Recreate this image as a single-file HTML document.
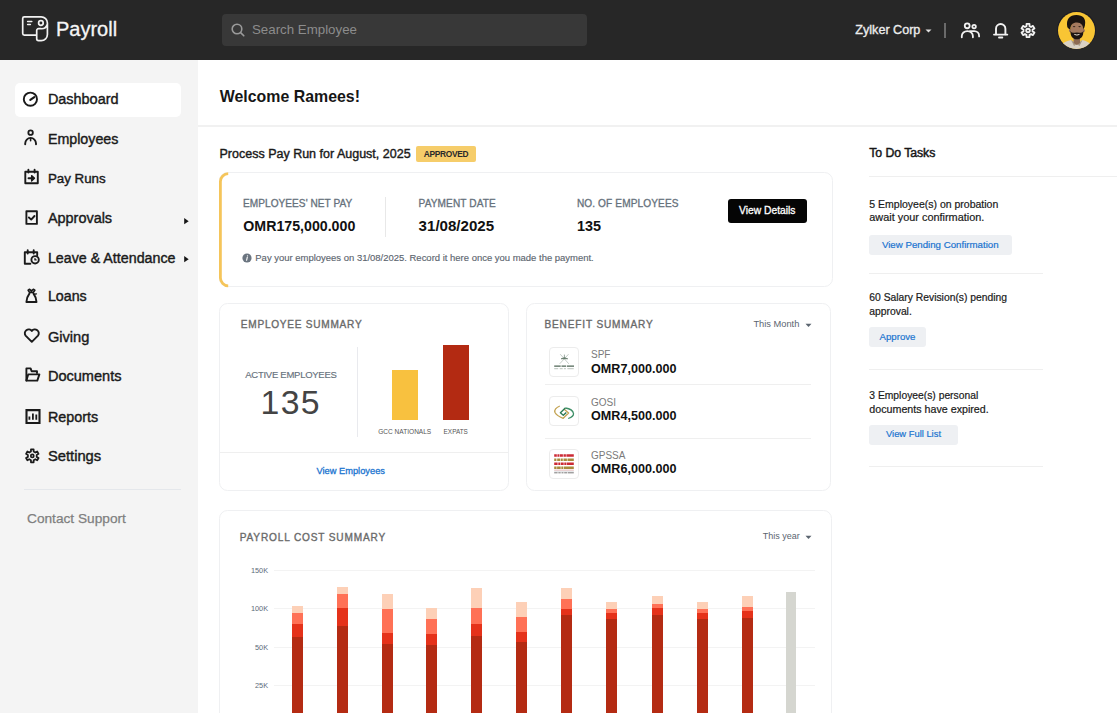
<!DOCTYPE html>
<html><head><meta charset="utf-8"><title>Payroll</title>
<style>
html,body{margin:0;padding:0;}
body{width:1117px;height:713px;overflow:hidden;position:relative;background:#fff;font-family:"Liberation Sans",sans-serif;}
.t{position:absolute;line-height:1;white-space:nowrap;}
.r{position:absolute;}
</style></head><body>
<div class="r" style="left:0px;top:0px;width:1117px;height:60px;background:#272727;"></div>
<div class="r" style="left:0px;top:60px;width:198px;height:653px;background:#f4f4f4;"></div>
<div class="r" style="left:198px;top:125px;width:919px;height:1.5px;background:#f1f1f1;"></div>
<svg class="r" style="left:18px;top:12px" width="34" height="34" viewBox="18 12 34 34" fill="none" stroke="#f2f2f2" stroke-width="1.7" stroke-linejoin="round" stroke-linecap="round">
<path d="M36.7 35.2 H24.3 A1.6 1.6 0 0 1 22.7 33.6 V18.5 A1.6 1.6 0 0 1 24.3 16.9 H41.2 A6.2 6.2 0 0 1 47.4 23.1 V34.4 A6.2 6.2 0 0 1 41.2 40.6 H38.5 A1.8 1.8 0 0 1 36.7 38.8 V30.5 A1.8 1.8 0 0 1 38.5 28.7 H40.9 A6 6 0 0 0 47.2 24.5"/>
<circle cx="40.9" cy="23" r="2.3"/>
<path d="M27.6 21.5 H31.8 M27.6 24.6 H30.4" stroke-width="1.5"/>
</svg>
<div class="t" style="left:56.00px;top:18.87px;font-size:20px;font-weight:400;color:#f5f5f5;-webkit-text-stroke:0.3px #f5f5f5;">Payroll</div>
<div class="r" style="left:222px;top:14px;width:365px;height:32px;background:#383838;border-radius:4px;"></div>
<svg class="r" style="left:230px;top:22px" width="16" height="16" viewBox="0 0 16 16" fill="none" stroke="#9a9a9a" stroke-width="1.6" stroke-linecap="round">
<circle cx="7" cy="7" r="4.8"/><path d="M10.6 10.6 L13.8 13.8"/></svg>
<div class="t" style="left:252.00px;top:22.74px;font-size:13.3px;font-weight:400;color:#8c8c8c;">Search Employee</div>
<div class="t" style="left:855.30px;top:24.13px;font-size:12.6px;font-weight:400;color:#ececec;-webkit-text-stroke:0.35px #ececec;">Zylker Corp</div>
<svg class="r" style="left:925px;top:29px" width="7" height="4" viewBox="0 0 7 4"><path d="M0.5 0.5 H6.5 L3.5 3.5 Z" fill="#e0e0e0"/></svg>
<div class="r" style="left:944px;top:23px;width:1.6px;height:15px;background:#6a6a6a;"></div>
<svg class="r" style="left:955px;top:16px" width="30" height="28" viewBox="955 16 30 28" fill="none" stroke="#f2f2f2" stroke-width="1.8" stroke-linecap="round">
<circle cx="967.2" cy="25.8" r="2.45"/><circle cx="974.1" cy="26.6" r="1.75"/>
<path d="M961.8 37.3 V36 A5.55 4.9 0 0 1 972.9 36 V37.3"/><path d="M970 31.1 H974.3 A4.8 4.8 0 0 1 979.1 35.9 V36.4"/></svg>
<svg class="r" style="left:988px;top:16px" width="54" height="28" viewBox="988 16 54 28" fill="none" stroke="#f2f2f2" stroke-width="1.9" stroke-linecap="round" stroke-linejoin="round">
<path d="M996 34.2 V28.7 A4.7 4.7 0 0 1 1005.4 28.7 V34.2"/><path d="M994 34.6 H1007.3"/><path d="M999 37.5 H1002.3"/>
<path d="M1026.50 26.15 L1026.50 23.90 L1029.50 23.90 L1029.50 26.15 L1031.02 27.03 L1032.97 25.90 L1034.47 28.50 L1032.52 29.62 L1032.52 31.38 L1034.47 32.50 L1032.97 35.10 L1031.02 33.97 L1029.50 34.85 L1029.50 37.10 L1026.50 37.10 L1026.50 34.85 L1024.98 33.97 L1023.03 35.10 L1021.53 32.50 L1023.48 31.38 L1023.48 29.62 L1021.53 28.50 L1023.03 25.90 L1024.98 27.03 Z" stroke-width="1.8"/><circle cx="1028" cy="30.5" r="1.8"/></svg>
<div class="r" style="left:1056.8px;top:10.7px;width:38.8px;height:38.8px;background:#1c1c24;border-radius:50%;"></div>
<div class="r" style="left:1057.7px;top:11.6px;width:37px;height:37px;border-radius:50%;overflow:hidden;background:#f8c534;">
<svg style="position:absolute;left:-1.7px;top:-1.6px" width="40" height="40" viewBox="0 0 40 40">
<path d="M3 40 C5 33 10 31 15 30 L20.8 34 L26.5 30 C31 31 35 33 38 40 Z" fill="#d9d1c5"/>
<path d="M15 30 L18 36 L20.8 34 Z M26.5 30 L23.5 36 L20.8 34 Z" fill="#a99a86"/>
<path d="M17.6 26 H24 V33 L20.8 35 L17.6 33 Z" fill="#8d6a52"/>
<ellipse cx="14.2" cy="20.5" rx="1.2" ry="1.8" fill="#9a7258"/><ellipse cx="27.6" cy="20.5" rx="1.2" ry="1.8" fill="#9a7258"/>
<ellipse cx="20.9" cy="19.8" rx="6.5" ry="8.4" fill="#a57a5e"/>
<path d="M11.3 17 C9.8 9 14 5 20.5 5.1 C26.8 5.2 30.2 8.5 29 15 C28.7 17 28 18 27.4 19.5 C27 15.5 25.2 12.6 21 12.6 C16.6 12.6 14.6 15 14.3 19.5 C13 19 11.8 18 11.3 17 Z" fill="#1a1410"/>
<path d="M14.4 20.5 C14.3 26.5 16.8 29.3 20.9 29.3 C25 29.3 27.6 26.5 27.4 20.5 C26.6 23.6 25 22.6 20.9 22.4 C16.8 22.6 15.2 23.6 14.4 20.5 Z" fill="#1d1511"/>
<ellipse cx="18.1" cy="16.6" rx="1.3" ry="0.7" fill="#3a2a20"/><ellipse cx="23.6" cy="16.6" rx="1.3" ry="0.7" fill="#3a2a20"/>
<path d="M18.3 24.4 Q20.9 25.7 23.5 24.4" stroke="#e9dfd2" stroke-width="1" fill="none"/>
</svg></div>
<div class="r" style="left:15px;top:83px;width:166px;height:33.5px;background:#ffffff;border-radius:5px;"></div>
<div class="t" style="left:47.90px;top:91.96px;font-size:14.455599999999999px;font-weight:400;color:#1a1a1a;-webkit-text-stroke:0.4px #1a1a1a;">Dashboard</div>
<div class="t" style="left:47.90px;top:132.44px;font-size:14.252px;font-weight:400;color:#1a1a1a;-webkit-text-stroke:0.4px #1a1a1a;">Employees</div>
<div class="t" style="left:47.90px;top:172.21px;font-size:13.335799999999999px;font-weight:400;color:#1a1a1a;-webkit-text-stroke:0.4px #1a1a1a;">Pay Runs</div>
<div class="t" style="left:47.90px;top:211.26px;font-size:14.455599999999999px;font-weight:400;color:#1a1a1a;-webkit-text-stroke:0.4px #1a1a1a;">Approvals</div>
<div class="t" style="left:47.90px;top:250.94px;font-size:14.252px;font-weight:400;color:#1a1a1a;-webkit-text-stroke:0.4px #1a1a1a;">Leave &amp; Attendance</div>
<div class="t" style="left:47.90px;top:288.94px;font-size:14.252px;font-weight:400;color:#1a1a1a;-webkit-text-stroke:0.4px #1a1a1a;">Loans</div>
<div class="t" style="left:47.90px;top:330.19px;font-size:14.6592px;font-weight:400;color:#1a1a1a;-webkit-text-stroke:0.4px #1a1a1a;">Giving</div>
<div class="t" style="left:47.90px;top:368.58px;font-size:14.557400000000001px;font-weight:400;color:#1a1a1a;-webkit-text-stroke:0.4px #1a1a1a;">Documents</div>
<div class="t" style="left:47.90px;top:409.55px;font-size:14.3538px;font-weight:400;color:#1a1a1a;-webkit-text-stroke:0.4px #1a1a1a;">Reports</div>
<div class="t" style="left:47.90px;top:448.50px;font-size:14.761000000000001px;font-weight:400;color:#1a1a1a;-webkit-text-stroke:0.4px #1a1a1a;">Settings</div>
<svg class="r" style="left:184px;top:217.8px" width="5" height="7" viewBox="0 0 5 7"><path d="M0.2 0 L4.7 3.15 L0.2 6.3 Z" fill="#151515"/></svg>
<svg class="r" style="left:184px;top:255.7px" width="5" height="7" viewBox="0 0 5 7"><path d="M0.2 0 L4.7 3.15 L0.2 6.3 Z" fill="#151515"/></svg>
<svg class="r" style="left:0px;top:60px" width="198" height="440" viewBox="0 60 198 440" fill="none" stroke="#1a1a1a" stroke-width="1.9" stroke-linecap="round" stroke-linejoin="round">
<circle cx="30.4" cy="99.2" r="6.6"/><path d="M30.3 99.9 L34.3 97.1" stroke-width="2.1"/>
<circle cx="30.6" cy="132.7" r="2.25" stroke-width="1.8"/><path d="M25.2 144.2 V143.5 A5.4 5.6 0 0 1 36 143.5 V144.2"/><path d="M30.6 138.5 V140.8" stroke-width="1.6"/>
<path d="M25.3 171.7 H37.8 V183.2 H25.3 Z"/><path d="M28.4 169.8 V172.6 M34.6 169.8 V172.6"/><path d="M28.5 178.3 H33.6"/><path d="M31.6 175.6 L34.5 178.3 L31.6 181 Z" fill="#1a1a1a" stroke-width="1.3"/>
<path d="M26.4 211.2 H36.9 V223.9 H26.4 Z"/><path d="M28.9 217.5 L31.2 219.6 L34.5 216"/>
<path d="M30.4 263.7 H24.8 V252.2 H37.2 V255.2"/><path d="M27.7 250.2 V253.6 M33.7 250.2 V253.6"/><circle cx="35.1" cy="259.8" r="3.7"/><path d="M35 258.6 V259.9 H36.1" stroke-width="1.4"/>
<path d="M28.2 290.3 L29.6 289.3 L31.4 290.9 L33.3 289.3 L34.8 290.3 L33.4 292.4 H29.5 Z" stroke-width="1.7"/><path d="M29.4 293.6 C27.3 296.4 26.4 299.4 26.4 302 H36.5 C36.5 299.4 35.6 296.4 33.5 293.6" stroke-width="1.9"/><path d="M34.3 294.3 L36.4 293.9" stroke-width="1.4"/>
<path d="M31.8 341.8 L25.6 335.6 A3.3 3.3 0 0 1 31.8 330.9 A3.3 3.3 0 0 1 38 335.6 Z"/>
<path d="M26.4 380.6 V368.4 H30.6 L31.6 371.3 H37 V373"/><path d="M26.4 380.6 L28.2 374.4 H39.4 L37.3 380.6 Z"/>
<path d="M26.5 410.1 H39.5 V423 H26.5 Z" stroke-width="2.1" stroke-linejoin="miter"/><path d="M29.4 416.5 V419.8 M32.9 413.5 V419.8 M36.3 414.6 V419.8" stroke-width="1.8" stroke-linecap="butt"/>
<path d="M30.95 451.61 L30.95 449.45 L33.65 449.45 L33.65 451.61 L35.34 452.58 L37.21 451.51 L38.56 453.84 L36.69 454.92 L36.69 456.88 L38.56 457.96 L37.21 460.29 L35.34 459.22 L33.65 460.19 L33.65 462.35 L30.95 462.35 L30.95 460.19 L29.26 459.22 L27.39 460.29 L26.04 457.96 L27.91 456.88 L27.91 454.92 L26.04 453.84 L27.39 451.51 L29.26 452.58 Z" stroke-width="1.75"/><circle cx="32.3" cy="455.9" r="1.5" stroke-width="1.7"/>
</svg>
<div class="r" style="left:24px;top:488.5px;width:157px;height:1.5px;background:#e4e7eb;"></div>
<div class="t" style="left:27.00px;top:511.90px;font-size:13.7px;font-weight:400;color:#7f7f7f;-webkit-text-stroke:0.25px #7f7f7f;">Contact Support</div>
<div class="t" style="left:219.80px;top:89.24px;font-size:15.9px;font-weight:700;color:#161616;">Welcome Ramees!</div>
<div class="t" style="left:219.50px;top:148.22px;font-size:12.5px;font-weight:400;color:#1a1a1a;-webkit-text-stroke:0.4px #1a1a1a;">Process Pay Run for August, 2025</div>
<div class="r" style="left:416px;top:146px;width:60px;height:15.5px;background:#f6cd6a;border-radius:2px;"></div>
<div class="t" style="left:416.00px;top:149.89px;font-size:8.4px;font-weight:700;color:#2a2a2a;letter-spacing:-0.3px;width:60px;text-align:center;">APPROVED</div>
<div class="r" style="left:219px;top:172px;width:614px;height:115px;box-sizing:border-box;border:1.5px solid #eff0f2;border-radius:8.5px;background:#fff;"></div>
<svg class="r" style="left:210px;top:165px" width="40" height="130" viewBox="210 165 40 130" fill="none"><path d="M228.2 173.7 A8 8 0 0 0 220.4 181.5 V278 A8 8 0 0 0 228.2 285.8" stroke="#f5c55a" stroke-width="2.8"/></svg>
<div class="t" style="left:243.00px;top:199.35px;font-size:10.1px;font-weight:400;color:#66717c;letter-spacing:0.04px;-webkit-text-stroke:0.3px #66717c;">EMPLOYEES&#39; NET PAY</div>
<div class="t" style="left:243.30px;top:218.88px;font-size:14.2px;font-weight:700;color:#111;">OMR175,000.000</div>
<div class="r" style="left:385px;top:197px;width:1px;height:40px;background:#e8e8e8;"></div>
<div class="t" style="left:418.60px;top:199.35px;font-size:10.1px;font-weight:400;color:#66717c;letter-spacing:0.1px;-webkit-text-stroke:0.3px #66717c;">PAYMENT DATE</div>
<div class="t" style="left:418.60px;top:218.12px;font-size:15.1px;font-weight:700;color:#111;">31/08/2025</div>
<div class="t" style="left:576.90px;top:199.35px;font-size:10.1px;font-weight:400;color:#66717c;letter-spacing:0.12px;-webkit-text-stroke:0.3px #66717c;">NO. OF EMPLOYEES</div>
<div class="t" style="left:576.90px;top:218.71px;font-size:14.4px;font-weight:700;color:#111;">135</div>
<div class="r" style="left:728px;top:199px;width:78.5px;height:24px;background:#050505;border-radius:3px;"></div>
<div class="t" style="left:728.00px;top:205.78px;font-size:10.3px;font-weight:400;color:#fff;width:78.5px;text-align:center;-webkit-text-stroke:0.3px #fff;">View Details</div>
<svg class="r" style="left:242.3px;top:253.1px" width="10" height="10" viewBox="0 0 10 10"><circle cx="5" cy="5" r="4.6" fill="#6b7580"/><path d="M5.3 4.2 L4.6 7.3" stroke="#fff" stroke-width="1.1" stroke-linecap="round"/><circle cx="5.5" cy="2.8" r="0.65" fill="#fff"/></svg>
<div class="t" style="left:255.30px;top:252.88px;font-size:9.48px;font-weight:400;color:#5d6670;-webkit-text-stroke:0.15px #5d6670;">Pay your employees on 31/08/2025. Record it here once you made the payment.</div>
<div class="r" style="left:219px;top:303px;width:290px;height:188px;box-sizing:border-box;border:1.5px solid #eff0f2;border-radius:8.5px;background:#fff;"></div>
<div class="t" style="left:240.80px;top:320.15px;font-size:10.1px;font-weight:400;color:#6a6a6a;letter-spacing:0.74px;-webkit-text-stroke:0.35px #6a6a6a;">EMPLOYEE SUMMARY</div>
<div class="t" style="left:245.30px;top:370.06px;font-size:9.5px;font-weight:400;color:#66717c;letter-spacing:-0.27px;-webkit-text-stroke:0.15px #66717c;">ACTIVE EMPLOYEES</div>
<div class="t" style="left:260.60px;top:386.09px;font-size:33.8px;font-weight:400;color:#444;letter-spacing:1.3px;">135</div>
<div class="r" style="left:356.5px;top:347px;width:1px;height:90px;background:#e9eaee;"></div>
<div class="r" style="left:391.5px;top:370px;width:26.5px;height:50px;background:#f8c13f;"></div>
<div class="r" style="left:442.5px;top:345px;width:26.5px;height:75px;background:#b32a12;"></div>
<div class="t" style="left:364.75px;top:428.96px;font-size:6.55px;font-weight:400;color:#555;width:80px;text-align:center;">GCC NATIONALS</div>
<div class="t" style="left:425.75px;top:429.08px;font-size:6.4px;font-weight:400;color:#555;width:60px;text-align:center;">EXPATS</div>
<div class="r" style="left:220px;top:452px;width:288px;height:1px;background:#efefef;"></div>
<div class="t" style="left:316.40px;top:467.13px;font-size:9.3px;font-weight:400;color:#1b74d0;-webkit-text-stroke:0.3px #1b74d0;">View Employees</div>
<div class="r" style="left:526px;top:303px;width:305px;height:188px;box-sizing:border-box;border:1.5px solid #eff0f2;border-radius:8.5px;background:#fff;"></div>
<div class="t" style="left:544.50px;top:319.75px;font-size:10.1px;font-weight:400;color:#6a6a6a;letter-spacing:0.83px;-webkit-text-stroke:0.35px #6a6a6a;">BENEFIT SUMMARY</div>
<div class="t" style="left:753.40px;top:319.93px;font-size:9.3px;font-weight:400;color:#5b6570;">This Month</div>
<svg class="r" style="left:805px;top:322.5px" width="7" height="5" viewBox="0 0 7 5"><path d="M0.5 0.8 H6.5 L3.5 4 Z" fill="#5b6570"/></svg>
<div class="r" style="left:549px;top:347px;width:30px;height:30px;box-sizing:border-box;border:1px solid #ececec;border-radius:4px;background:#fff;"></div>
<div class="t" style="left:591.00px;top:350.14px;font-size:10.0px;font-weight:400;color:#7a7a7a;">SPF</div>
<div class="t" style="left:591.00px;top:362.73px;font-size:12.6px;font-weight:700;color:#111;">OMR7,000.000</div>
<div class="r" style="left:549px;top:396px;width:30px;height:30px;box-sizing:border-box;border:1px solid #ececec;border-radius:4px;background:#fff;"></div>
<div class="t" style="left:591.00px;top:397.54px;font-size:10.0px;font-weight:400;color:#7a7a7a;">GOSI</div>
<div class="t" style="left:591.00px;top:410.13px;font-size:12.6px;font-weight:700;color:#111;">OMR4,500.000</div>
<div class="r" style="left:549px;top:449px;width:30px;height:30px;box-sizing:border-box;border:1px solid #ececec;border-radius:4px;background:#fff;"></div>
<div class="t" style="left:591.00px;top:450.74px;font-size:10.0px;font-weight:400;color:#7a7a7a;">GPSSA</div>
<div class="t" style="left:591.00px;top:463.33px;font-size:12.6px;font-weight:700;color:#111;">OMR6,000.000</div>
<div class="r" style="left:544.5px;top:384px;width:266.5px;height:1px;background:#efefef;"></div>
<div class="r" style="left:544.5px;top:438px;width:266.5px;height:1px;background:#efefef;"></div>
<svg class="r" style="left:546px;top:344px" width="36" height="140" viewBox="546 344 36 140" fill="none">
<g stroke="#7d8f84" stroke-width="0.45"><path d="M560.2 354.2 L568.8 363.8 M568.5 354.2 L559.7 363.8"/></g>
<path d="M564.4 354.6 V359" stroke="#6e8276" stroke-width="0.7"/>
<path d="M561 358.8 Q564.4 356.6 567.8 358.8 Z" fill="#5f7566" stroke="#5f7566" stroke-width="0.6"/>
<path d="M554.2 366.2 H574" stroke="#4f6656" stroke-width="1.3" stroke-dasharray="6.5 0.8 4.5 0.8 8 0.2"/>
<path d="M554.2 368.7 H574" stroke="#8b9a90" stroke-width="0.6" stroke-dasharray="4 1.5 3 1.2 2 1.5 6 0.2"/>
<path d="M559.8 406 C556 407.5 554 410 555 412.5 C556.5 415.5 561 417.5 563.2 418.3 L568.6 413 L564.2 409.3" stroke="#c3a352" stroke-width="1.3" stroke-linejoin="round"/>
<path d="M565.3 408 C569 408.5 573 410.5 573.5 413.5 C573.8 415.8 571.5 417.4 568.2 418.5" stroke="#3f9068" stroke-width="1.3"/>
<path d="M565.3 407.9 L560.4 412.8 L563.3 415.3 L566.3 412.5" stroke="#2d7a55" stroke-width="1.4" stroke-linejoin="round"/>
<path d="M554.2 455.5 H573.8" stroke="#cc2a35" stroke-width="2.6" stroke-dasharray="2.6 0.6 1.8 0.5 3.2 0.6 2.4 0.5 7.8 0.4"/>
<path d="M554.2 459.8 H573.8" stroke="#a88a3c" stroke-width="2.4" stroke-dasharray="2.2 0.8 3 0.6 2 0.7 3.4 0.6 6.7 0.4"/>
<path d="M554.2 463.8 H573.8" stroke="#cc2a35" stroke-width="2.4" stroke-dasharray="3.4 0.7 2 0.6 2.8 0.6 2.2 0.5 6.8 0.4"/>
<path d="M554.2 467.7 H573.8" stroke="#a88a3c" stroke-width="2.6" stroke-dasharray="2.4 0.5 3.6 0.6 2 0.6 10 0.3"/>
<path d="M554.2 470.2 H573.8" stroke="#d86a6a" stroke-width="0.5"/>
<path d="M554.2 471.2 H573.8" stroke="#dcdfe3" stroke-width="1"/>
<path d="M554.2 472.8 H573.8" stroke="#555" stroke-width="0.8" stroke-dasharray="3.4 0.7 2.4 0.8 2 0.7 3 0.6 6 0.4"/>
</svg>
<div class="r" style="left:219px;top:510px;width:613px;height:215px;box-sizing:border-box;border:1.5px solid #eff0f2;border-radius:8.5px;background:#fff;"></div>
<div class="t" style="left:239.70px;top:533.15px;font-size:10.1px;font-weight:400;color:#6a6a6a;letter-spacing:0.84px;-webkit-text-stroke:0.35px #6a6a6a;">PAYROLL COST SUMMARY</div>
<div class="t" style="left:762.80px;top:532.18px;font-size:9.0px;font-weight:400;color:#5b6570;">This year</div>
<svg class="r" style="left:805px;top:534.5px" width="7" height="5" viewBox="0 0 7 5"><path d="M0.5 0.8 H6.5 L3.5 4 Z" fill="#5b6570"/></svg>
<div class="r" style="left:274px;top:569.7px;width:541px;height:1px;background:#f3f3f3;"></div>
<div class="t" style="left:240.00px;top:566.62px;font-size:7.3px;font-weight:400;color:#5d6b78;width:28px;text-align:right;">150K</div>
<div class="r" style="left:274px;top:608.3px;width:541px;height:1px;background:#f3f3f3;"></div>
<div class="t" style="left:240.00px;top:605.22px;font-size:7.3px;font-weight:400;color:#5d6b78;width:28px;text-align:right;">100K</div>
<div class="r" style="left:274px;top:646.8px;width:541px;height:1px;background:#f3f3f3;"></div>
<div class="t" style="left:240.00px;top:643.72px;font-size:7.3px;font-weight:400;color:#5d6b78;width:28px;text-align:right;">50K</div>
<div class="r" style="left:274px;top:685.1px;width:541px;height:1px;background:#f3f3f3;"></div>
<div class="t" style="left:240.00px;top:682.02px;font-size:7.3px;font-weight:400;color:#5d6b78;width:28px;text-align:right;">25K</div>
<div class="r" style="left:291.7px;top:606.1px;width:11px;height:106.9px;background:#fdd0b7;"></div>
<div class="r" style="left:291.7px;top:612.8px;width:11px;height:100.2px;background:#ff7156;"></div>
<div class="r" style="left:291.7px;top:623.9px;width:11px;height:89.1px;background:#e5321a;"></div>
<div class="r" style="left:291.7px;top:636.6px;width:11px;height:76.4px;background:#b42b13;"></div>
<div class="r" style="left:336.5px;top:586.6px;width:11px;height:126.4px;background:#fdd0b7;"></div>
<div class="r" style="left:336.5px;top:593.7px;width:11px;height:119.3px;background:#ff7156;"></div>
<div class="r" style="left:336.5px;top:607.8px;width:11px;height:105.2px;background:#e5321a;"></div>
<div class="r" style="left:336.5px;top:625.8px;width:11px;height:87.2px;background:#b42b13;"></div>
<div class="r" style="left:381.6px;top:593.7px;width:11px;height:119.3px;background:#fdd0b7;"></div>
<div class="r" style="left:381.6px;top:608.7px;width:11px;height:104.3px;background:#ff7156;"></div>
<div class="r" style="left:381.6px;top:632.9px;width:11px;height:80.1px;background:#e5321a;"></div>
<div class="r" style="left:381.6px;top:643.6px;width:11px;height:69.4px;background:#b42b13;"></div>
<div class="r" style="left:426.4px;top:608.1px;width:11px;height:104.9px;background:#fdd0b7;"></div>
<div class="r" style="left:426.4px;top:619.1px;width:11px;height:93.9px;background:#ff7156;"></div>
<div class="r" style="left:426.4px;top:634.2px;width:11px;height:78.8px;background:#e5321a;"></div>
<div class="r" style="left:426.4px;top:644.8px;width:11px;height:68.2px;background:#b42b13;"></div>
<div class="r" style="left:470.8px;top:588.0px;width:11px;height:125.0px;background:#fdd0b7;"></div>
<div class="r" style="left:470.8px;top:608.1px;width:11px;height:104.9px;background:#ff7156;"></div>
<div class="r" style="left:470.8px;top:624.1px;width:11px;height:88.9px;background:#e5321a;"></div>
<div class="r" style="left:470.8px;top:636.2px;width:11px;height:76.8px;background:#b42b13;"></div>
<div class="r" style="left:515.9px;top:601.5px;width:11px;height:111.5px;background:#fdd0b7;"></div>
<div class="r" style="left:515.9px;top:616.5px;width:11px;height:96.5px;background:#ff7156;"></div>
<div class="r" style="left:515.9px;top:632.2px;width:11px;height:80.8px;background:#e5321a;"></div>
<div class="r" style="left:515.9px;top:641.8px;width:11px;height:71.2px;background:#b42b13;"></div>
<div class="r" style="left:561.4px;top:588.0px;width:11px;height:125.0px;background:#fdd0b7;"></div>
<div class="r" style="left:561.4px;top:599.1px;width:11px;height:113.9px;background:#ff7156;"></div>
<div class="r" style="left:561.4px;top:608.7px;width:11px;height:104.3px;background:#e5321a;"></div>
<div class="r" style="left:561.4px;top:614.7px;width:11px;height:98.3px;background:#b42b13;"></div>
<div class="r" style="left:606.4px;top:601.5px;width:11px;height:111.5px;background:#fdd0b7;"></div>
<div class="r" style="left:606.4px;top:608.7px;width:11px;height:104.3px;background:#ff7156;"></div>
<div class="r" style="left:606.4px;top:613.1px;width:11px;height:99.9px;background:#e5321a;"></div>
<div class="r" style="left:606.4px;top:619.1px;width:11px;height:93.9px;background:#b42b13;"></div>
<div class="r" style="left:651.8px;top:595.7px;width:11px;height:117.3px;background:#fdd0b7;"></div>
<div class="r" style="left:651.8px;top:603.7px;width:11px;height:109.3px;background:#ff7156;"></div>
<div class="r" style="left:651.8px;top:608.1px;width:11px;height:104.9px;background:#e5321a;"></div>
<div class="r" style="left:651.8px;top:614.5px;width:11px;height:98.5px;background:#b42b13;"></div>
<div class="r" style="left:696.9px;top:601.5px;width:11px;height:111.5px;background:#fdd0b7;"></div>
<div class="r" style="left:696.9px;top:608.7px;width:11px;height:104.3px;background:#ff7156;"></div>
<div class="r" style="left:696.9px;top:613.1px;width:11px;height:99.9px;background:#e5321a;"></div>
<div class="r" style="left:696.9px;top:619.1px;width:11px;height:93.9px;background:#b42b13;"></div>
<div class="r" style="left:742.2px;top:595.8px;width:11px;height:117.2px;background:#fdd0b7;"></div>
<div class="r" style="left:742.2px;top:606.6px;width:11px;height:106.4px;background:#ff7156;"></div>
<div class="r" style="left:742.2px;top:611.3px;width:11px;height:101.7px;background:#e5321a;"></div>
<div class="r" style="left:742.2px;top:617.5px;width:11px;height:95.5px;background:#b42b13;"></div>
<div class="r" style="left:785.8px;top:592.3px;width:10.5px;height:121px;background:#d5d6d0;"></div>
<div class="t" style="left:869.30px;top:146.69px;font-size:12.3px;font-weight:400;color:#161616;letter-spacing:-0.07px;-webkit-text-stroke:0.45px #161616;">To Do Tasks</div>
<div class="r" style="left:869px;top:176px;width:248px;height:1px;background:#efefef;"></div>
<div class="t" style="left:869.30px;top:198.91px;font-size:10.5px;font-weight:400;color:#1a1a1a;-webkit-text-stroke:0.2px #1a1a1a;">5 Employee(s) on probation</div>
<div class="t" style="left:869.30px;top:212.07px;font-size:10.9px;font-weight:400;color:#1a1a1a;-webkit-text-stroke:0.2px #1a1a1a;">await your confirmation.</div>
<div class="r" style="left:869px;top:235px;width:142.5px;height:19.5px;background:#eef0f3;border-radius:3px;"></div>
<div class="t" style="left:869.00px;top:239.59px;font-size:9.7px;font-weight:400;color:#1b74d0;width:142.5px;text-align:center;-webkit-text-stroke:0.2px #1b74d0;">View Pending Confirmation</div>
<div class="r" style="left:869px;top:273px;width:173.5px;height:1px;background:#efefef;"></div>
<div class="t" style="left:869.30px;top:292.75px;font-size:10.34px;font-weight:400;color:#1a1a1a;-webkit-text-stroke:0.2px #1a1a1a;">60 Salary Revision(s) pending</div>
<div class="t" style="left:869.30px;top:306.55px;font-size:10.34px;font-weight:400;color:#1a1a1a;-webkit-text-stroke:0.2px #1a1a1a;">approval.</div>
<div class="r" style="left:869px;top:327px;width:57px;height:20px;background:#eef0f3;border-radius:3px;"></div>
<div class="t" style="left:869.00px;top:332.31px;font-size:9.67px;font-weight:400;color:#1b74d0;width:57px;text-align:center;-webkit-text-stroke:0.2px #1b74d0;">Approve</div>
<div class="r" style="left:869px;top:368.5px;width:173.5px;height:1px;background:#efefef;"></div>
<div class="t" style="left:869.30px;top:390.56px;font-size:10.32px;font-weight:400;color:#1a1a1a;-webkit-text-stroke:0.2px #1a1a1a;">3 Employee(s) personal</div>
<div class="t" style="left:869.30px;top:404.04px;font-size:10.7px;font-weight:400;color:#1a1a1a;-webkit-text-stroke:0.2px #1a1a1a;">documents have expired.</div>
<div class="r" style="left:869px;top:425px;width:89px;height:19.5px;background:#eef0f3;border-radius:3px;"></div>
<div class="t" style="left:869.00px;top:430.37px;font-size:9.37px;font-weight:400;color:#1b74d0;width:89px;text-align:center;-webkit-text-stroke:0.2px #1b74d0;">View Full List</div>
<div class="r" style="left:869px;top:466px;width:173.5px;height:1px;background:#efefef;"></div>
</body></html>
